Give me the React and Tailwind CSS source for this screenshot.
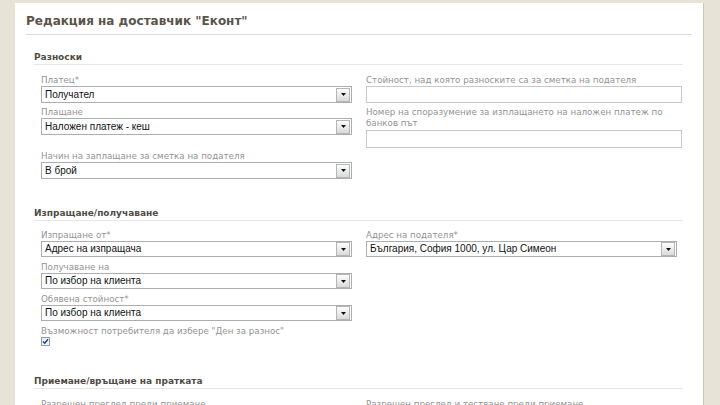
import React from 'react';

const verdana = { fontFamily: '"DejaVu Sans", Verdana, sans-serif' };

// Поле с падащо меню
const Select = ({ value, className = '' }) => (
  <div
    className={`flex h-[16px] items-center justify-between border border-[#a9aeb3] bg-white pl-[3px] ${className}`}
  >
    <span className="font-['Liberation_Sans',Arial,sans-serif] text-[10px] leading-none text-[#111]">
      {value}
    </span>
    <span className="mr-px flex h-[14px] w-[14px] items-center justify-center border border-[#b5b5b5] bg-gradient-to-b from-[#fdfdfd] to-[#dadada]">
      <svg width="5" height="3" viewBox="0 0 5 3">
        <path d="M0 0h5L2.5 3z" fill="#111" />
      </svg>
    </span>
  </div>
);

const Input = ({ className = '' }) => (
  <div className={`h-[17px] border border-[#c8c8c8] bg-white ${className}`} />
);

const Label = ({ children, className = '' }) => (
  <div className={`text-[8.7px] leading-[11px] text-[#939393] ${className}`} style={verdana}>
    {children}
  </div>
);

const SectionHead = ({ children, className = '' }) => (
  <div
    className={`ml-[8px] mr-[9px] border-b border-[#e6e6e6] pb-px text-[9px] font-bold leading-[12px] text-[#4f4b45] ${className}`}
    style={verdana}
  >
    {children}
  </div>
);

const App = () => {
  return (
    <div className="min-h-[405px] bg-[#e8e3d7] pl-[15px] pr-[16px] pt-[3px]">
      <div className="h-[402px] overflow-hidden border-r border-[#cdc7ba] bg-white pl-[11px] pr-[11px] pt-[10px]">
        {/* Заглавие */}
        <h1
          className="h-[22px] border-b border-[#dcdcdc] text-[12px] font-bold leading-[16px] text-[#5a5449]"
          style={verdana}
        >
          Редакция на доставчик "Еконт"
        </h1>

        {/* Разноски */}
        <SectionHead className="mt-[16px]">Разноски</SectionHead>
        <div className="ml-[15px] mt-[10px] grid grid-cols-[311px_316px] gap-x-[14px]">
          <div className="flex flex-col">
            <Label>Платец*</Label>
            <Select value="Получател" className="h-[17px]" />
            <Label className="mt-[4px]">Плащане</Label>
            <Select value="Наложен платеж - кеш" className="h-[17px]" />
            <Label className="mt-[16px]">Начин на заплащане за сметка на подателя</Label>
            <Select value="В брой" className="h-[17px]" />
          </div>
          <div className="flex flex-col">
            <Label>Стойност, над която разноските са за сметка на подателя</Label>
            <Input />
            <Label className="mt-[4px] leading-[10px]">
              Номер на споразумение за изплащането на наложен платеж по банков път
            </Label>
            <Input className="mt-px h-[18px]" />
          </div>
        </div>

        {/* Изпращане/получаване */}
        <SectionHead className="mt-[28px]">Изпращане/получаване</SectionHead>
        <div className="ml-[15px] mt-[9px] grid grid-cols-[311px_311px] gap-x-[14px]">
          <div className="flex flex-col">
            <Label>Изпращане от*</Label>
            <Select value="Адрес на изпращача" />
            <Label className="mt-[5px]">Получаване на</Label>
            <Select value="По избор на клиента" />
            <Label className="mt-[5px]">Обявена стойност*</Label>
            <Select value="По избор на клиента" />
            <Label className="mt-[5px]">Възможност потребителя да избере "Ден за разнос"</Label>
            <div className="flex h-[9px] w-[9px] items-center justify-center border border-[#8c9cb5] bg-gradient-to-br from-[#e4e8ef] to-[#f8f9fb]">
              <svg width="7" height="7" viewBox="0 0 7 7">
                <path d="M1 3.5l1.8 1.8L6 1.2" stroke="#1f3f8f" strokeWidth="1.4" fill="none" />
              </svg>
            </div>
          </div>
          <div className="flex flex-col">
            <Label>Адрес на подателя*</Label>
            <Select value="България, София 1000, ул. Цар Симеон" />
          </div>
        </div>

        {/* Приемане/връщане на пратката */}
        <SectionHead className="mt-[29px]">Приемане/връщане на пратката</SectionHead>
        <div className="ml-[15px] mt-[10px] grid grid-cols-[311px_316px] gap-x-[14px]">
          <Label>Разрешен преглед преди приемане</Label>
          <Label>Разрешен преглед и тестване преди приемане</Label>
        </div>
      </div>
    </div>
  );
};

export default App;
